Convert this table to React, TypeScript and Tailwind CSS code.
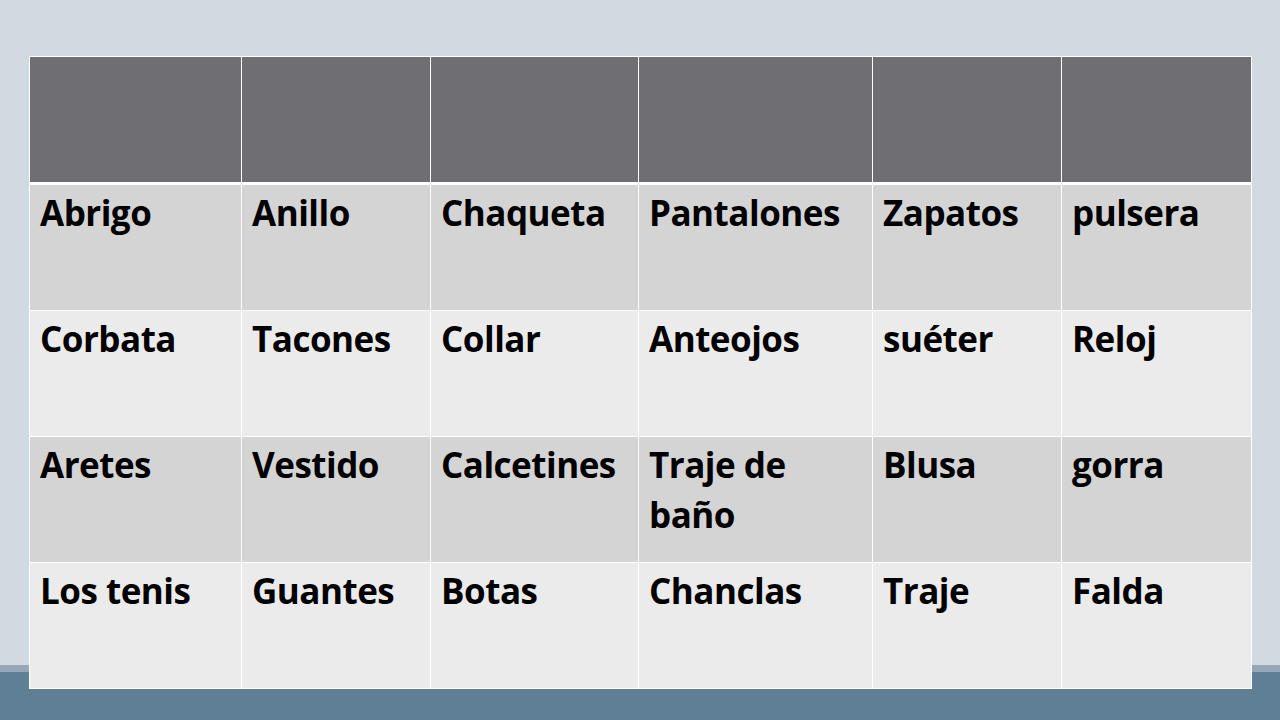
import React from 'react';

const rows: string[][] = [
  ['Abrigo', 'Anillo', 'Chaqueta', 'Pantalones', 'Zapatos', 'pulsera'],
  ['Corbata', 'Tacones', 'Collar', 'Anteojos', 'suéter', 'Reloj'],
  ['Aretes', 'Vestido', 'Calcetines', 'Traje de baño', 'Blusa', 'gorra'],
  ['Los tenis', 'Guantes', 'Botas', 'Chanclas', 'Traje', 'Falda'],
];

const cols = 'grid grid-cols-[211px_188px_207px_233px_188px_189px] gap-x-px';

const App: React.FC = () => {
  return (
    <div className="w-[1280px] h-[720px] overflow-hidden bg-[linear-gradient(to_bottom,#d1d9e1_665px,#96a8b7_665px,#96a8b7_672px,#5f7f96_672px)] pt-[56px] pl-[29px]">
      {/* table */}
      <div
        className="w-fit bg-white p-px flex flex-col gap-[3px]"
        style={{ fontFamily: '"Open Sans", Lato, sans-serif' }}
      >
        <div className={cols}>
          {rows[0].map((_, i) => (
            <div key={i} className="h-[125px] bg-[#6f6e73]" />
          ))}
        </div>
        <div className="flex flex-col gap-px">
          {rows.map((row, r) => (
            <div key={r} className={cols}>
              {row.map((cell, c) => (
                <div
                  key={c}
                  className={`h-[125px] pl-[10px] pr-2 pt-[3px] text-[35px] leading-[50px] font-bold tracking-[-0.5px] text-black ${
                    r % 2 === 0 ? 'bg-[#d4d4d4]' : 'bg-[#ebebeb]'
                  }`}
                >
                  {cell}
                </div>
              ))}
            </div>
          ))}
        </div>
      </div>
    </div>
  );
};

export default App;
